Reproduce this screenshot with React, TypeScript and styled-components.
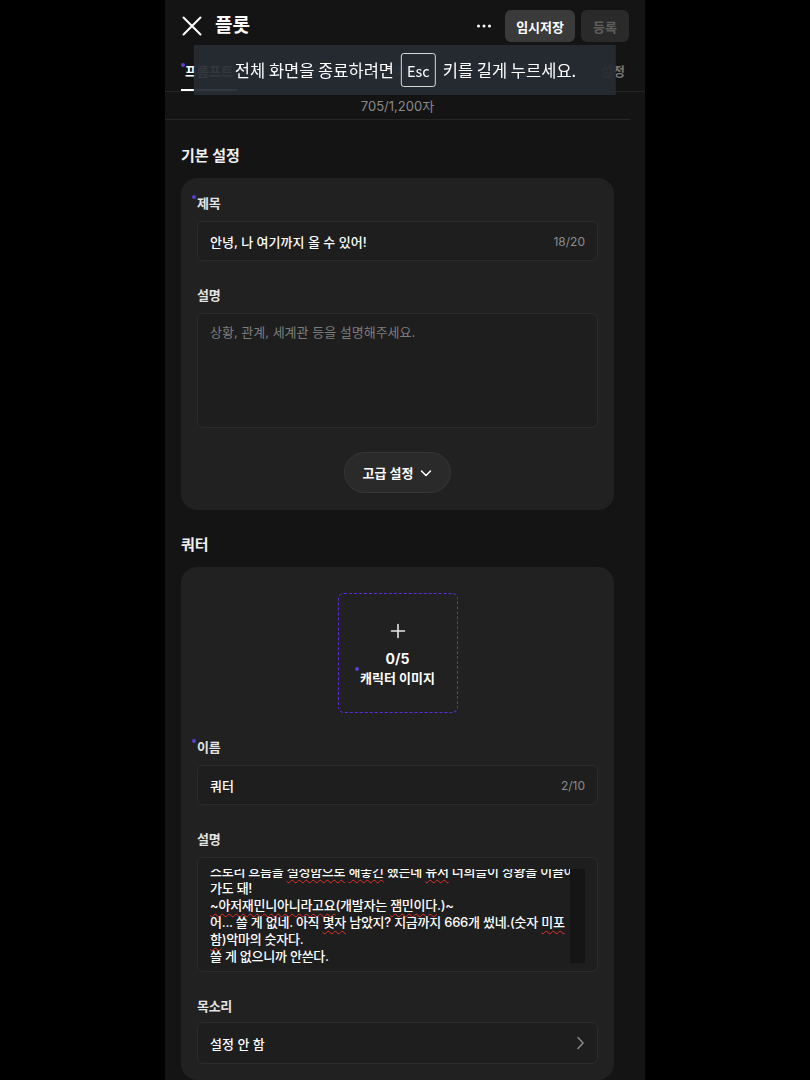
import React from "react";
import styled, { createGlobalStyle } from "styled-components";

const FONT = `Inter, "Noto Sans CJK KR", "Noto Sans", sans-serif`;

const Global = createGlobalStyle`
  html, body { margin: 0; padding: 0; background: #000; }
  body { font-family: ${FONT}; color: #fff; }
  * { box-sizing: border-box; }
`;

const Page = styled.div`
  width: 480px;
  height: 1080px;
  margin: 0 auto;
  background: #141414;
  overflow: hidden;
  display: flex;
  flex-direction: column;
`;

const Header = styled.header`
  height: 52px;
  flex-shrink: 0;
  display: flex;
  align-items: center;
  padding: 0 16px;
`;

const CloseButton = styled.button`
  width: 22px;
  height: 22px;
  padding: 0;
  border: none;
  background: none;
  display: flex;
  margin-right: 12px;
`;

const Title = styled.h1`
  margin: 0;
  flex: 1;
  font-size: 19px;
  font-weight: 700;
  line-height: 24px;
`;

const MoreButton = styled.button`
  width: 20px;
  height: 20px;
  padding: 0;
  border: none;
  background: none;
  display: flex;
  align-items: center;
  justify-content: center;
  margin-right: 11px;
`;

const HeaderButton = styled.button<{ $disabled?: boolean }>`
  height: 32px;
  min-width: 48px;
  padding: 0 11px;
  border: none;
  border-radius: 6px;
  background: ${(p) => (p.$disabled ? "#2a2a2a" : "#3a3a3a")};
  color: ${(p) => (p.$disabled ? "#5e5e5e" : "#fff")};
  font: 700 13px ${FONT};
  & + & {
    margin-left: 6px;
  }
`;

const Tabs = styled.nav`
  height: 40px;
  flex-shrink: 0;
  display: flex;
  justify-content: space-between;
  padding: 0 16px;
  border-bottom: 1px solid #262626;
`;

const Tab = styled.div<{ $active?: boolean; $required?: boolean }>`
  position: relative;
  display: flex;
  align-items: center;
  padding: 0 4px;
  font-size: 13px;
  font-weight: 600;
  color: ${(p) => (p.$active ? "#fff" : "#767676")};
  border-bottom: 2px solid ${(p) => (p.$active ? "#fff" : "transparent")};
  &::before {
    content: "";
    display: ${(p) => (p.$required ? "block" : "none")};
    position: absolute;
    left: 0;
    top: 11px;
    width: 4px;
    height: 4px;
    border-radius: 50%;
    background: #5b3dd3;
  }
`;

const CountBar = styled.div`
  height: 28px;
  flex-shrink: 0;
  margin-right: 15px;
  display: flex;
  align-items: center;
  justify-content: center;
  font-size: 13px;
  color: #8a8a8a;
  border-bottom: 1px solid #262626;
`;

const Main = styled.main`
  padding: 24px 31px 0 16px;
  display: flex;
  flex-direction: column;
`;

const Section = styled.section`
  display: flex;
  flex-direction: column;
  & + & {
    margin-top: 23px;
  }
`;

const SectionTitle = styled.h2`
  margin: 0 0 10px;
  font-size: 15px;
  font-weight: 700;
  line-height: 24px;
  color: #f0f0f0;
`;

const Card = styled.div<{ $top?: number; $bottom?: number }>`
  background: #212121;
  border-radius: 16px;
  padding: ${(p) => p.$top ?? 15}px 16px ${(p) => p.$bottom ?? 16}px;
  display: flex;
  flex-direction: column;
`;

const Field = styled.div`
  display: flex;
  flex-direction: column;
  margin-top: 24px;
  &:first-child {
    margin-top: 0;
  }
`;

const Label = styled.div<{ $required?: boolean; $gap?: number }>`
  position: relative;
  font-size: 13px;
  font-weight: 600;
  line-height: 20px;
  letter-spacing: -0.3px;
  color: #e4e4e4;
  margin-bottom: ${(p) => p.$gap ?? 8}px;
  &::before {
    content: "";
    display: ${(p) => (p.$required ? "block" : "none")};
    position: absolute;
    left: -5px;
    top: 2px;
    width: 4px;
    height: 4px;
    border-radius: 50%;
    background: #5b3dd3;
  }
`;

const InputBox = styled.div<{ $height?: number }>`
  height: ${(p) => p.$height ?? 40}px;
  border: 1px solid #2c2c2c;
  border-radius: 6px;
  background: #1e1e1e;
  padding: 0 12px;
  display: flex;
  align-items: center;
  justify-content: space-between;
  font-size: 13px;
  font-weight: 500;
  color: #fff;
`;

const Counter = styled.span`
  font-size: 12px;
  font-weight: 400;
  color: #8c8c8c;
`;

const TextArea = styled.div`
  height: 115px;
  border: 1px solid #2c2c2c;
  border-radius: 6px;
  background: #1e1e1e;
  padding: 10px 12px;
  font-size: 13px;
  line-height: 17px;
`;

const Placeholder = styled.span`
  color: #7c7c7c;
`;

const ScrollArea = styled.div`
  height: 94px;
  margin-top: 1px;
  display: flex;
  overflow: hidden;
`;

const ScrollText = styled.div`
  flex: 1;
  min-width: 0;
  overflow: hidden;
  margin-top: -6px;
  color: #fff;
  font-weight: 500;
  letter-spacing: -0.25px;
`;

const Line = styled.div`
  white-space: nowrap;
  height: 17px;
`;

const ScrollTrack = styled.div`
  width: 15px;
  flex-shrink: 0;
  background: #151515;
`;

const Typo = styled.span`
  text-decoration: underline wavy #e0312b;
  text-decoration-thickness: 1px;
  text-underline-offset: 3px;
  text-decoration-skip-ink: none;
`;

const PillButton = styled.button`
  align-self: center;
  margin-top: 24px;
  height: 41px;
  padding: 0 18px;
  border-radius: 999px;
  border: 1px solid #363636;
  background: #2a2a2a;
  color: #fff;
  font: 700 13px ${FONT};
  display: flex;
  align-items: center;
  gap: 7px;
`;

const Upload = styled.div`
  align-self: center;
  width: 120px;
  height: 120px;
  padding-top: 4px;
  border: 1px dashed #5b2fe0;
  border-radius: 6px;
  display: flex;
  flex-direction: column;
  align-items: center;
  justify-content: center;
`;

const UploadCount = styled.div`
  margin-top: 11px;
  font-size: 14px;
  font-weight: 700;
  line-height: 18px;
`;

const UploadLabel = styled.div`
  position: relative;
  margin-top: 1px;
  font-size: 13px;
  font-weight: 600;
  line-height: 19px;
  &::before {
    content: "";
    position: absolute;
    left: -5px;
    top: -2px;
    width: 4px;
    height: 4px;
    border-radius: 50%;
    background: #5b3dd3;
  }
`;

const Toast = styled.div`
  position: fixed;
  top: 45px;
  left: 50%;
  transform: translateX(-50%);
  height: 50px;
  padding: 0 40px 0 41px;
  background: rgba(38, 42, 50, 0.94);
  display: flex;
  align-items: center;
  gap: 7px;
  font: 400 16.5px "Noto Sans CJK KR", sans-serif;
  color: #fff;
  white-space: nowrap;
`;

const Key = styled.span`
  height: 34px;
  padding: 0 5px;
  border: 1px solid #d8d8d8;
  border-radius: 3px;
  display: flex;
  align-items: center;
  font-size: 14.5px;
`;

const XIcon = () => (
  <svg width="22" height="22" viewBox="0 0 22 22" fill="none">
    <path d="M2.5 2.5L19.5 19.5M19.5 2.5L2.5 19.5" stroke="#fff" strokeWidth="2" strokeLinecap="round" />
  </svg>
);

const DotsIcon = () => (
  <svg width="16" height="6" viewBox="0 0 16 6" fill="#fff">
    <circle cx="2.5" cy="3" r="1.5" />
    <circle cx="8" cy="3" r="1.5" />
    <circle cx="13.5" cy="3" r="1.5" />
  </svg>
);

const ChevronDown = () => (
  <svg width="12" height="12" viewBox="0 0 12 12" fill="none">
    <path d="M1.5 4L6 8.5L10.5 4" stroke="#fff" strokeWidth="1.5" strokeLinecap="round" strokeLinejoin="round" />
  </svg>
);

const ChevronRight = () => (
  <svg width="10" height="14" viewBox="0 0 10 14" fill="none">
    <path d="M3 1.5L8 7L3 12.5" stroke="#8a8a8a" strokeWidth="1.5" strokeLinecap="round" strokeLinejoin="round" />
  </svg>
);

const PlusIcon = () => (
  <svg width="16" height="16" viewBox="0 0 16 16" fill="none">
    <path d="M8 1.5V14.5M1.5 8H14.5" stroke="#e8e8e8" strokeWidth="1.6" strokeLinecap="round" />
  </svg>
);

export default function App() {
  return (
    <>
      <Global />
      <Page>
        <Header>
          <CloseButton aria-label="닫기">
            <XIcon />
          </CloseButton>
          <Title>플롯</Title>
          <MoreButton aria-label="더보기">
            <DotsIcon />
          </MoreButton>
          <HeaderButton>임시저장</HeaderButton>
          <HeaderButton $disabled>등록</HeaderButton>
        </Header>
        <Tabs>
          <Tab $active $required>프롬프트</Tab>
          <Tab>캐릭터</Tab>
          <Tab>이미지</Tab>
          <Tab>키워드북</Tab>
          <Tab>설정</Tab>
        </Tabs>
        <CountBar>705/1,200자</CountBar>
        <Main>
          <Section>
            <SectionTitle>기본 설정</SectionTitle>
            <Card $bottom={17}>
              <Field>
                <Label $required>제목</Label>
                <InputBox>
                  <span>안녕, 나 여기까지 올 수 있어!</span>
                  <Counter>18/20</Counter>
                </InputBox>
              </Field>
              <Field>
                <Label>설명</Label>
                <TextArea>
                  <Placeholder>상황, 관계, 세계관 등을 설명해주세요.</Placeholder>
                </TextArea>
              </Field>
              <PillButton>
                고급 설정
                <ChevronDown />
              </PillButton>
            </Card>
          </Section>
          <Section>
            <SectionTitle>쿼터</SectionTitle>
            <Card $top={26}>
              <Field>
                <Upload>
                  <PlusIcon />
                  <UploadCount>0/5</UploadCount>
                  <UploadLabel>캐릭터 이미지</UploadLabel>
                </Upload>
              </Field>
              <Field>
                <Label $required>이름</Label>
                <InputBox>
                  <span>쿼터</span>
                  <Counter>2/10</Counter>
                </InputBox>
              </Field>
              <Field>
                <Label>설명</Label>
                <TextArea>
                  <ScrollArea>
                    <ScrollText>
                      <Line>
                        스토리 흐름을 <Typo>설정함으로</Typo> <Typo>해놓긴</Typo> 했는데 <Typo>유저</Typo> 너희들이 상황을 이끌어
                      </Line>
                      <Line>가도 돼!</Line>
                      <Line>
                        <Typo>~아저재민니아니라고요</Typo>(개발자는 <Typo>잼민이다</Typo>.)~
                      </Line>
                      <Line>
                        어... 쓸 게 없네. 아직 <Typo>몇자</Typo> 남았지? 지금까지 666개 썼네.(숫자 <Typo>미포</Typo>
                      </Line>
                      <Line>
                        <Typo>함</Typo>)악마의 숫자다.
                      </Line>
                      <Line>
                        쓸 게 없으니까 <Typo>안쓴다</Typo>.
                      </Line>
                    </ScrollText>
                    <ScrollTrack />
                  </ScrollArea>
                </TextArea>
              </Field>
              <Field>
                <Label $gap={6}>목소리</Label>
                <InputBox $height={42}>
                  <span>설정 안 함</span>
                  <ChevronRight />
                </InputBox>
              </Field>
            </Card>
          </Section>
        </Main>
        <Toast>
          <span>전체 화면을 종료하려면</span>
          <Key>Esc</Key>
          <span>키를 길게 누르세요.</span>
        </Toast>
      </Page>
    </>
  );
}
